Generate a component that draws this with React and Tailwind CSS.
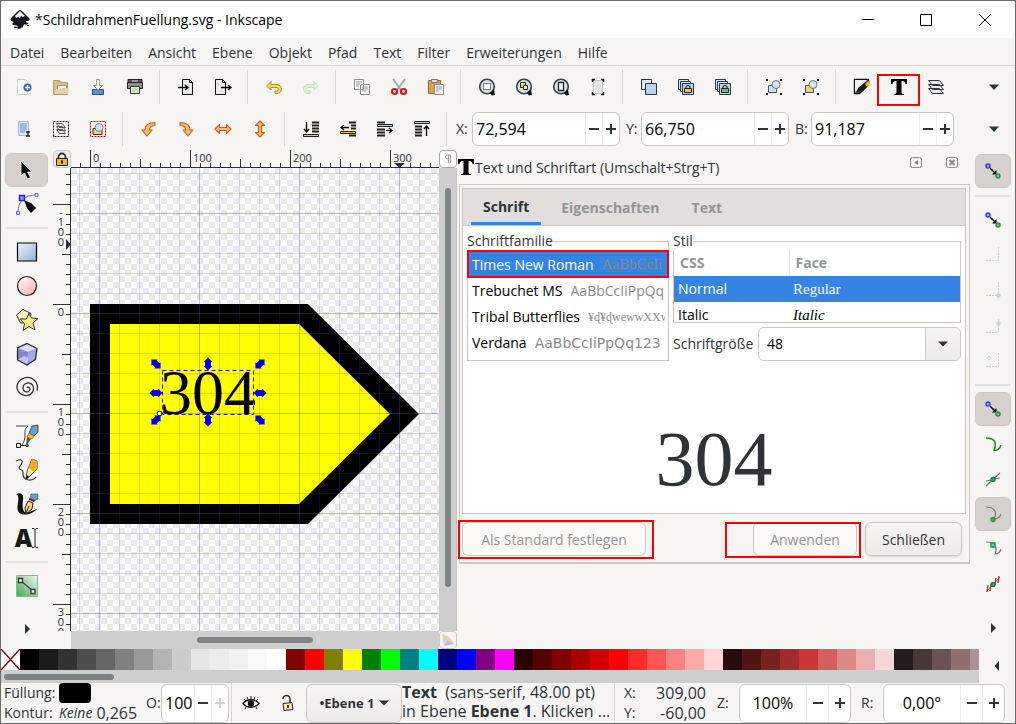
import React from 'react';

function Icon({ size = 16, children }) {
  return (
    <svg width={size} height={size} viewBox={`0 0 ${size} ${size}`} fill="none" className="shrink-0" aria-hidden="true">
      {children}
    </svg>
  );
}

function Magnifier({ children }) {
  return (
    <Icon size={18}>
      <circle cx="9" cy="8.500" r="7.300" fill="#d3e0ee" stroke="#3b4045" strokeWidth="1.600" />
      {children}
      <path d="M12 15l4-3.500 1 5.500-3 .5z" fill="#111" />
    </Icon>
  );
}

function Clones({ lock }) {
  return (
    <Icon size={18}>
      <path d="M1.5 1.5h10v10h-10z" fill="#dfe9f4" stroke="#23374d" />
      {lock && <path d="M3.500 3.500h10v10h-10z" fill="#dfe9f4" stroke="#23374d" />}
      <path d="M5.5 5.5h11v11h-11z" fill="#bcd2ea" stroke="#23374d" />
      {lock && (
        <>
          <path d="M9 11V9.500a2 2 0 014 0V11" stroke="#222" strokeWidth="1.200" />
          <path d="M7.500 10.500h7v4h-7z" fill={lock} stroke="#222" />
        </>
      )}
    </Icon>
  );
}

function Group({ fill }) {
  return (
    <Icon size={18}>
      <path d="M3.500 7.500h8v7h-8z" fill={fill} stroke="#44515e" />
      <circle cx="11" cy="6.500" r="4" fill="#d5e2ef" stroke="#66727e" />
      <path d="M1 1h2v2H1zM15 1h2v2h-2zM1 15h2v2H1zM15 15h2v2h-2z" fill="#111" />
    </Icon>
  );
}

const arrowOrange = { fill: '#f7b77a', stroke: '#c8610f', strokeWidth: 1.1, strokeLinejoin: 'round' };

const icons = {
  neu: (
    <Icon size={18}>
      <path d="M2.500 1.500h8l2 2v13h-10z" fill="#fbfbfb" stroke="#c9ccd0" />
      <circle cx="12.500" cy="9.500" r="4" fill="#3568b0" />
      <path d="M12.500 7v5M10 9.500h5" stroke="#fff" strokeWidth="1.4" />
    </Icon>
  ),
  oeffnen: (
    <Icon size={18}>
      <path d="M1.500 16.500v-14h6l1 2h7v12z" fill="#d8bd92" stroke="#b6976a" />
      <path d="M5.500 7.500h9v4h-9z" fill="#f5f3ee" stroke="#a99270" />
      <path d="M2.500 16l2-5h5l2-1h5v6z" fill="#e5cfab" />
    </Icon>
  ),
  speichern: (
    <Icon size={18}>
      <path d="M3.500 11.500h11v5h-11z" fill="#5f8fd0" stroke="#2c5697" />
      <path d="M7.500 1.500h3v6h3l-4.500 4.500-4.500-4.500h3z" fill="#f7f7f7" stroke="#9a9a9a" />
    </Icon>
  ),
  drucken: (
    <Icon size={18}>
      <path d="M2 1.500h14v3H2z" fill="#555" stroke="#222" />
      <path d="M1.500 4.500h15v6h-15z" fill="#8b8e8b" stroke="#222" />
      <path d="M6 3h6" stroke="#ddd" />
      <path d="M4.500 8.500h9v7h-9z" fill="#e5f5dd" stroke="#333" />
      <path d="M6 11h6M6 13h6" stroke="#9cc48b" />
    </Icon>
  ),
  importieren: (
    <Icon size={18}>
      <path d="M5.500 1.500h7l3 3v12h-10z" fill="#e9e9e9" stroke="#111" />
      <path d="M12.500 1.500v3h3" stroke="#111" />
      <path d="M1 9.500h9M8 7l3 2.500L8 12" stroke="#000" strokeWidth="1.3" />
    </Icon>
  ),
  exportieren: (
    <Icon size={18}>
      <path d="M1.500 1.500h7l3 3v12h-10z" fill="#e9e9e9" stroke="#111" />
      <path d="M8.500 1.500v3h3" stroke="#111" />
      <path d="M7 9.500h9M14 7l3 2.500-3 2.500" stroke="#000" strokeWidth="1.3" />
    </Icon>
  ),
  rueckgaengig: (
    <Icon size={18}>
      <path d="M1.500 8L6 3.500v3h6a4 4 0 010 9h-2v-2.500h2a1.800 1.800 0 000-3.500H6V12z" fill="#f3d860" stroke="#b8920f" />
    </Icon>
  ),
  wiederholen: (
    <Icon size={18}>
      <path d="M16.500 8L12 3.500v3H6a4 4 0 000 9h2v-2.500H6a1.800 1.800 0 010-3.500h6V12z" fill="#e0efd9" stroke="#c3dfb8" />
    </Icon>
  ),
  kopieren: (
    <Icon size={18}>
      <path d="M1.500 1.500h9v10h-9zM7.500 6.500h9v10h-9z" fill="#f6f6f6" stroke="#8b8e8f" />
      <path d="M3 4h6M3 6h4M3 8h3M9 9h6M9 11h6M9 13h4" stroke="#9b9b9b" />
    </Icon>
  ),
  ausschneiden: (
    <Icon size={18}>
      <path d="M3 1l8 11M15 1L7 12" stroke="#a5a9ab" strokeWidth="2" />
      <circle cx="4.500" cy="13.500" r="2.500" stroke="#d11a1a" strokeWidth="2.2" />
      <circle cx="13.500" cy="13.500" r="2.500" stroke="#d11a1a" strokeWidth="2.2" />
    </Icon>
  ),
  einfuegen: (
    <Icon size={18}>
      <path d="M1.500 2.500h12v13h-12z" fill="#d9a450" stroke="#96692a" />
      <path d="M4.500 1.500h6v3h-6z" fill="#ddd" stroke="#777" />
      <path d="M7.500 6.500h9v10h-9z" fill="#fafafa" stroke="#888" />
      <path d="M9 9h6M9 11h6M9 13h3" stroke="#999" />
    </Icon>
  ),
  zoomAuswahl: (
    <Magnifier>
      <path d="M5.500 5.500h7v6h-7z" fill="#fff" stroke="#111" strokeDasharray="1 1" />
    </Magnifier>
  ),
  zoomZeichnung: (
    <Magnifier>
      <path d="M5.500 4.500h5v5h-5z" fill="#f9d95b" stroke="#222" />
      <path d="M8.500 7.500h4v4h-4z" fill="#fbe89b" stroke="#222" />
    </Magnifier>
  ),
  zoomSeite: (
    <Magnifier>
      <path d="M6.500 4.500h5v8h-5z" fill="#fff" stroke="#222" strokeWidth="1.3" />
    </Magnifier>
  ),
  zoomBreite: (
    <Icon size={18}>
      <path d="M4.500 2.500h9v13h-9z" fill="#e4e4e4" stroke="#c4c4c4" />
      <path d="M3 1h3L3 4zM15 1h-3l3 3zM3 17h3l-3-3zM15 17h-3l3-3z" fill="#111" stroke="#111" strokeWidth="0.500" />
    </Icon>
  ),
  duplizieren: <Clones />,
  klonen: <Clones lock="#f6c945" />,
  klonTrennen: <Clones lock="#7bb661" />,
  gruppieren: <Group fill="#cfdeee" />,
  gruppeAufheben: <Group fill="#f4d265" />,
  fuellung: (
    <Icon size={18}>
      <path d="M1.500 1.500h14v5l-9 9h-5z" fill="#6a6a6a" stroke="#111" strokeWidth="1.400" />
      <path d="M2 14V2h12z" fill="#f1f1f1" />
      <path d="M4 14l1-4 8-6 3 3-6 6z" fill="#181818" />
      <path d="M12 6l5-4v5l-3 2z" fill="#f0b323" />
    </Icon>
  ),
  schrift: (
    <Icon size={18}>
      <path d="M1 1h16v5h-1.500c-.4-2.200-1.200-3-3-3H11.500v11c0 1.600.7 2 2.500 2.100V17H4v-.9c1.800-.1 2.500-.5 2.500-2.100V3H5.500c-1.800 0-2.600.8-3 3H1z" fill="#000" />
    </Icon>
  ),
  ebenen: (
    <Icon size={18}>
      <path d="M1.500 10.500h11l4 5h-11zM1.500 6.500h11l4 5h-11zM1.500 2.500h11l4 5h-11z" fill="#e7e9ea" stroke="#34393c" />
    </Icon>
  ),
  alles: (
    <Icon size={18}>
      <path d="M3.500 1.500h10v14h-10z" fill="#d6e4f4" stroke="#a6bcd6" />
      <path d="M5 4h7M5 6h7M5 8h7M5 10h6M5 12h5" stroke="#6a8fbc" />
      <path d="M11 12h4M11 16h4M13 12v4" stroke="#222" strokeWidth="1.3" />
    </Icon>
  ),
  alleEbenen: (
    <Icon size={18}>
      <path d="M1.500 1.500h15v15h-15z" stroke="#000" strokeDasharray="2 1" />
      <path d="M4.500 9.500h6l3 4h-6zM4.500 6.500h6l3 4h-6zM4.500 3.500h6l3 4h-6z" fill="#e8e8e8" stroke="#555" />
    </Icon>
  ),
  auswahlAufheben: (
    <Icon size={18}>
      <path d="M1.500 1.500h15v15h-15z" stroke="#c80000" strokeDasharray="2 1" />
      <path d="M4 8.500h9v6H4z" fill="#f5d468" stroke="#333" />
      <circle cx="10" cy="7.500" r="4" fill="#d4e1f0" stroke="#77808a" />
    </Icon>
  ),
  linksDrehen: (
    <Icon size={18}>
      <path d="M15 2.500v3c-4 0-5.500 1.500-5.500 4.500H12l-5 6-5-6h3c0-5 3.500-7.500 10-7.500z" {...arrowOrange} />
    </Icon>
  ),
  rechtsDrehen: (
    <Icon size={18}>
      <path d="M3 2.500v3c4 0 5.500 1.500 5.500 4.500H6l5 6 5-6h-3c0-5-3.500-7.500-10-7.500z" {...arrowOrange} />
    </Icon>
  ),
  horizontal: (
    <Icon size={18}>
      <path d="M1 9l4.500-4.500v3h7v-3L17 9l-4.500 4.500v-3h-7v3z" {...arrowOrange} />
    </Icon>
  ),
  vertikal: (
    <Icon size={18}>
      <path d="M9 1l4.500 4.500h-3v7h3L9 17l-4.500-4.500h3v-7h-3z" {...arrowOrange} />
    </Icon>
  ),
  nachUnten: (
    <Icon size={18}>
      <path d="M10 2.500h7M10 5.500h7M10 8.500h7M10 11.500h7" stroke="#222" strokeWidth="2" />
      <path d="M4.500 2v9M2 9l2.500 3L7 9" stroke="#000" strokeWidth="1.3" />
      <path d="M1.500 14.500h15v2h-15z" fill="#f3c83d" stroke="#222" />
    </Icon>
  ),
  absenken: (
    <Icon size={18}>
      <path d="M10 2.500h7M12 5.500h5M12 8.500h5M10 15.500h7" stroke="#222" strokeWidth="2" />
      <path d="M2 7.500h8M5 5L2 7.500 5 10" stroke="#000" strokeWidth="1.3" />
      <path d="M1.500 11.500h15v2h-15z" fill="#f3c83d" stroke="#222" />
    </Icon>
  ),
  anheben: (
    <Icon size={18}>
      <path d="M1 2.500h8M1 9.500h8M1 12.500h8M1 15.500h8" stroke="#222" strokeWidth="2" />
      <path d="M1.500 4.500h15v2h-15z" fill="#b9d0ea" stroke="#222" />
      <path d="M10 10.500h6M13 8l3 2.500-3 2.500" stroke="#000" strokeWidth="1.2" />
    </Icon>
  ),
  nachOben: (
    <Icon size={18}>
      <path d="M1.500 1.500h15v2h-15z" fill="#b9d0ea" stroke="#222" />
      <path d="M2 6.500h7M2 9.500h7M2 12.500h7M2 15.500h7" stroke="#222" strokeWidth="2" />
      <path d="M13.500 16V6M11 9l2.500-3L16 9" stroke="#000" strokeWidth="1.3" />
    </Icon>
  ),
};

const toolIcons = {
  auswahl: (
    <Icon size={24}>
      <path d="M6 3v15l3.500-3 3 6 3-1.500-3-5.500H17z" fill="#000" stroke="#fff" strokeWidth="0.8" />
    </Icon>
  ),
  knoten: (
    <Icon size={24}>
      <path d="M3 21C3 9 9 3 22 3" stroke="#777" />
      <path d="M4.500 3.500h5v5h-5z" fill="#8f8ff0" stroke="#2020e0" strokeWidth="1.4" />
      <path d="M20 1.500h3v3h-3zM1.500 19.500h3v3h-3z" fill="#dcdcff" stroke="#6464e6" />
      <path d="M9 8l7 3 5 5-5 5-4-5z" fill="#000" />
    </Icon>
  ),
  rechteck: (
    <Icon size={24}>
      <defs>
        <linearGradient id="rechteckVerlauf" x1="0" y1="0" x2="1" y2="1">
          <stop stopColor="#eef5fb" />
          <stop offset="1" stopColor="#8fb0d0" />
        </linearGradient>
      </defs>
      <path d="M2.500 3h19v18h-19z" fill="url(#rechteckVerlauf)" stroke="#000" strokeWidth="1.2" />
    </Icon>
  ),
  ellipse: (
    <Icon size={24}>
      <defs>
        <linearGradient id="ellipseVerlauf" x1="0" y1="0" x2="1" y2="1">
          <stop stopColor="#fff" />
          <stop offset="1" stopColor="#fba5b0" />
        </linearGradient>
      </defs>
      <circle cx="12" cy="12" r="9.500" fill="url(#ellipseVerlauf)" stroke="#222" strokeWidth="1.2" />
    </Icon>
  ),
  stern: (
    <Icon size={24}>
      <path d="M8 1.500l8 4-1.500 9-9 .5-4-8z" fill="#fdf6b8" stroke="#333" />
      <path d="M14 5l2.500 5 6.500.5-5 4.500 2 7-6-3.500-6 4 1.500-6.500-4.500-5h6.500z" fill="#fbec83" stroke="#333" />
    </Icon>
  ),
  quader: (
    <Icon size={24}>
      <path d="M12 1.500l10 5-1.500 11L12 23l-9.500-5V6z" fill="#8286cc" />
      <path d="M12 1.500l10 5-9 3.500-10.500-4z" fill="#dcddf7" />
      <path d="M13 10l9-3.500-1.500 11L12 23z" fill="#a4a7e2" />
      <path d="M2.500 18l6-4 5 1.500L12 23z" fill="#c3c5f0" />
      <path d="M12 1.500l10 5-1.500 11L12 23l-9.500-5V6z" stroke="#222" strokeWidth="1.200" />
    </Icon>
  ),
  spirale: (
    <Icon size={24}>
      <path d="M12 12c1-2 4 0 2.500 2.500-2 3-7 1-6.500-3 .5-5 7-6 9.500-2.500 3 5-1 11-7 10.500C4 19 .5 13 2.500 8 5 2 12 0 17 2.500c5 3 6 8 5 12" stroke="#333" strokeWidth="1.300" />
    </Icon>
  ),
  stift: (
    <Icon size={24}>
      <path d="M1 2h12C9 5 10 8 10 11c0 4-1 7-3 10" stroke="#444" />
      <path d="M1.500 19.500h4v4h-4zM11 20.500h2v2h-2zM5 21.500h6" fill="#fff" stroke="#111" />
      <path d="M17 2l6-1v7l-4 4-5-3z" fill="#6b9cc4" stroke="#334" strokeWidth="0.800" />
      <path d="M14 9l5 3-2 3-5-2z" fill="#f4b92b" stroke="#7a5a10" strokeWidth="0.600" />
      <path d="M12 13l4 2-5 7z" fill="#555" />
    </Icon>
  ),
  freihand: (
    <Icon size={24}>
      <path d="M1 3c6-3 8 0 4 5-3 5 3 2 3 6-1 9 9 10 13 5" stroke="#333" strokeWidth="1.200" />
      <path d="M17 1l5 2v8l-8 8-3 2 1-8z" fill="#fbe6a6" stroke="#333" strokeWidth="0.800" />
      <path d="M17 1l5 2v8l-3 3-5-4z" fill="#f6a81c" />
      <path d="M11.500 17l3 2-3.500 2z" fill="#111" />
    </Icon>
  ),
  kalligrafie: (
    <Icon size={24}>
      <path d="M1 2c5-2 8 0 7 6-1 9 0 14 6 12l8-3c-5 6-16 8-19 2C1 14 6 4 1 2z" fill="#111" />
      <path d="M16 2h7v5l-4 2-4-3z" fill="#6b9cc4" stroke="#334" strokeWidth="0.500" />
      <path d="M14 6l6 2-1 2-5-2z" fill="#b00020" />
      <path d="M13 9l5 2-1 6-6 5-1-6z" fill="#fbd978" stroke="#222" />
      <path d="M11 21l3-7" stroke="#222" />
    </Icon>
  ),
  text: (
    <span className="flex items-center">
      <b className="text-2xl leading-6 font-black text-[#1a1a1a]">A</b>
      <svg width="6" height="22" viewBox="0 0 6 22" fill="none" aria-hidden="true">
        <path d="M0 1.500h2l1 1 1-1h2M3 2v18M0 20.500h2l1-1 1 1h2" stroke="#222" />
      </svg>
    </span>
  ),
  verlauf: (
    <Icon size={24}>
      <defs>
        <linearGradient id="farbVerlauf" x1="0" y1="1" x2="1" y2="0">
          <stop stopColor="#47a554" />
          <stop offset="1" stopColor="#eef8ef" />
        </linearGradient>
      </defs>
      <path d="M1.500 1.500h21v21h-21z" fill="url(#farbVerlauf)" stroke="#7cc088" />
      <path d="M6 7l12 10" stroke="#444" strokeWidth="1.300" />
      <path d="M3.500 4.500h4v4h-4zM16 15.500h4v4h-4z" fill="#fff" stroke="#333" strokeWidth="1.300" />
    </Icon>
  ),
};

const snapIcons = {
  fang: (
    <Icon size={18}>
      <path d="M6 6l5 5" stroke="#000" strokeWidth="1.500" />
      <path d="M12.500 8v4.500H8z" fill="#000" />
      <circle cx="4" cy="4" r="2" fill="#a9a9fa" stroke="#3a3af0" strokeWidth="1.500" />
      <circle cx="14" cy="14" r="2" fill="#8fb09a" stroke="#2f8f3f" strokeWidth="1.500" />
    </Icon>
  ),
  rahmen: (
    <Icon size={18}>
      <path d="M2 14.500h12.500V1" stroke="#c9dccb" strokeDasharray="2 1" strokeWidth="1.200" />
    </Icon>
  ),
  rahmenEcke: (
    <Icon size={18}>
      <path d="M2 14.500h12.500V1" stroke="#cdd1cd" strokeDasharray="2 1" />
      <circle cx="14.500" cy="14.500" r="2.200" fill="#c4dcca" />
    </Icon>
  ),
  rahmenKante: (
    <Icon size={18}>
      <path d="M2 16.500h12.500V3" stroke="#cdd1cd" strokeDasharray="2 1" />
      <circle cx="14.500" cy="7.500" r="2.200" fill="#c4dcca" />
    </Icon>
  ),
  rahmenMitte: (
    <Icon size={18}>
      <path d="M2 15.500h12.500V2" stroke="#cdd1cd" strokeDasharray="2 1" />
      <circle cx="5" cy="7" r="1.500" stroke="#c4dcca" />
    </Icon>
  ),
  pfad: (
    <Icon size={18}>
      <path d="M2 3c9 0 11 5 8 12 4 1 6-2 7-5" stroke="#178a1d" strokeWidth="1.500" />
    </Icon>
  ),
  schnitt: (
    <Icon size={18}>
      <path d="M2 16L16 3M2 11l14-3" stroke="#777" strokeWidth="1.200" />
      <circle cx="9" cy="9.500" r="2" fill="#3a8fc8" stroke="#168a1d" strokeWidth="1.300" />
    </Icon>
  ),
  spitze: (
    <Icon size={18}>
      <path d="M2 2c8 0 12 5 8 12 4 0 6-2 7-5" stroke="#777" strokeWidth="1.200" />
      <circle cx="9" cy="14.500" r="2" fill="#5b8fa8" stroke="#2f9a3a" strokeWidth="1.300" />
    </Icon>
  ),
  glatt: (
    <Icon size={18}>
      <path d="M2 2c8 0 12 6 9 12 4 0 5-2 6-5" stroke="#777" strokeWidth="1.200" />
      <path d="M7 3h4v4H7z" fill="#7fb3e0" stroke="#12a01d" strokeWidth="1.300" />
    </Icon>
  ),
  mitte: (
    <Icon size={18}>
      <path d="M2 17L16 2" stroke="#777" />
      <path d="M4 10l-1 7M7 9l-1 7M12 3l-1 7M15 1l-1 7" stroke="#c92020" strokeWidth="1.300" />
      <circle cx="9" cy="9.500" r="2" fill="#3a8fc8" stroke="#168a1d" strokeWidth="1.300" />
    </Icon>
  ),
};

const commandBar = [
  [['Neu', 'neu'], ['Öffnen', 'oeffnen'], ['Speichern', 'speichern'], ['Drucken', 'drucken']],
  [['Importieren', 'importieren'], ['Exportieren', 'exportieren']],
  [['Rückgängig', 'rueckgaengig'], ['Wiederholen', 'wiederholen']],
  [['Kopieren', 'kopieren'], ['Ausschneiden', 'ausschneiden'], ['Einfügen', 'einfuegen']],
  [['Auswahl zoomen', 'zoomAuswahl'], ['Zeichnung zoomen', 'zoomZeichnung'], ['Seite zoomen', 'zoomSeite'], ['Seitenbreite', 'zoomBreite']],
  [['Duplizieren', 'duplizieren'], ['Klonen', 'klonen'], ['Klonverbindung trennen', 'klonTrennen']],
  [['Gruppieren', 'gruppieren'], ['Gruppierung aufheben', 'gruppeAufheben']],
  [['Füllung und Kontur', 'fuellung'], ['Text und Schriftart', 'schrift'], ['Ebenen', 'ebenen']],
];

const controlBar = [
  [['Alles auswählen', 'alles'], ['In allen Ebenen auswählen', 'alleEbenen'], ['Auswahl aufheben', 'auswahlAufheben']],
  [['Nach links drehen', 'linksDrehen'], ['Nach rechts drehen', 'rechtsDrehen'], ['Horizontal umkehren', 'horizontal'], ['Vertikal umkehren', 'vertikal']],
  [['Nach ganz unten', 'nachUnten'], ['Absenken', 'absenken'], ['Anheben', 'anheben'], ['Nach ganz oben', 'nachOben']],
];

const tools = [
  [['Auswahl', 'auswahl'], ['Knoten', 'knoten']],
  [['Rechteck', 'rechteck'], ['Ellipse', 'ellipse'], ['Stern', 'stern'], ['Quader', 'quader'], ['Spirale', 'spirale']],
  [['Stift', 'stift'], ['Freihand', 'freihand'], ['Kalligrafie', 'kalligrafie'], ['Text', 'text']],
  [['Farbverlauf', 'verlauf']],
];

const snaps = [
  [['Einrasten', 'fang', true]],
  [['Umrandungen', 'fang'], ['Kanten', 'rahmen'], ['Ecken', 'rahmenEcke'], ['Kantenmitten', 'rahmenKante'], ['Mittelpunkte', 'rahmenMitte']],
  [['Knoten', 'fang', true], ['Pfade', 'pfad'], ['Überschneidungen', 'schnitt'], ['Spitze Knoten', 'spitze', true], ['Glatte Knoten', 'glatt'], ['Linienmitten', 'mitte']],
];

const palette = [
  '#000000', '#1a1a1a', '#333333', '#4d4d4d', '#666666', '#808080', '#999999', '#b3b3b3', '#cccccc', '#e6e6e6', '#ececec', '#f2f2f2', '#f9f9f9', '#ffffff',
  '#800000', '#ff0000', '#808000', '#ffff00', '#008000', '#00ff00', '#008080', '#00ffff', '#000080', '#0000ff', '#800080', '#ff00ff',
  '#2b0000', '#550000', '#800000', '#aa0000', '#d40000', '#ff0000', '#ff2a2a', '#ff5555', '#ff8080', '#ffaaaa', '#ffd5d5',
  '#280b0b', '#501616', '#782121', '#a02c2c', '#c83737', '#d35f5f', '#de8787', '#e9afaf', '#f4d7d7',
  '#241c1c', '#483737', '#6c5353', '#916f6f', '#ac9393',
];

const fontList = [
  { name: 'Times New Roman', sample: 'AaBbCcIi', style: "font-['Liberation_Serif',serif] text-[15px]" },
  { name: 'Trebuchet MS', sample: 'AaBbCcIiPpQq1', style: "font-['Open_Sans',sans-serif]" },
  { name: 'Tribal Butterflies', sample: '¥ɖ¥ɖwewwXXw', style: "font-['Liberation_Serif',serif] text-xs" },
  { name: 'Verdana', sample: 'AaBbCcIiPpQq123', style: "font-['DejaVu_Sans',sans-serif]" },
];

function TitleBar() {
  return (
    <div className="flex h-[37px] shrink-0 items-center bg-white pr-px pl-2 text-black">
      <svg width="22" height="22" viewBox="0 0 22 22" aria-hidden="true">
        <path d="M11 1c1 0 2 1 3 2l6 6c1 1 1 2 0 2.500l-3 1c-1 .5 1 1 2 1.500s0 1.500-1 1.500h-3l-1 2.500c-.5 1-2 .5-2 1s-2 1.500-3.500.5c-1-.5.500-1.500 0-2.500-1-1-4-.5-5-1.500s1.500-1.500 1-2.500-3-1-3-2S2 9 3 8l5-5c1-1 2-2 3-2z" fill="#15171c" />
        <path d="M11 2l5 5-2 1-2-1-1 2-2-1-2 1-1-2z" fill="#e8ecf2" />
        <path d="M5 18.500c1-1 3-.5 3 .5M18 16.500h2" stroke="#15171c" />
      </svg>
      <h1 className="ml-1 flex-1 text-sm">*SchildrahmenFuellung.svg - Inkscape</h1>
      <div className="flex">
        <button aria-label="Minimieren" className="flex h-9 w-[59px] items-center justify-center">
          <Icon size={14}><path d="M1 6.500h12" stroke="#000" /></Icon>
        </button>
        <button aria-label="Maximieren" className="flex h-9 w-[58px] items-center justify-center">
          <Icon size={14}><path d="M1.500 1.500h11v11h-11z" stroke="#000" /></Icon>
        </button>
        <button aria-label="Schließen" className="flex h-9 w-[59px] items-center justify-center">
          <Icon size={14}><path d="M1 1l12 12M13 1L1 13" stroke="#000" /></Icon>
        </button>
      </div>
    </div>
  );
}

function MenuBar() {
  const items = ['Datei', 'Bearbeiten', 'Ansicht', 'Ebene', 'Objekt', 'Pfad', 'Text', 'Filter', 'Erweiterungen', 'Hilfe'];
  return (
    <nav className="flex h-7 shrink-0 items-center gap-4 border-b border-[#d9d6d3] pt-[2px] pl-[9px]">
      {items.map((item) => (
        <button key={item}>{item}</button>
      ))}
    </nav>
  );
}

function IconButtons({ groups }) {
  return groups.map((group, i) => (
    <React.Fragment key={i}>
      {i > 0 && <div className="mr-[7px] ml-[6px] h-[34px] w-px bg-[#d9d6d3]" />}
      {group.map(([label, icon]) => (
        <button key={label} aria-label={label} className="relative flex h-[34px] w-[37px] items-center justify-center">
          {icons[icon]}
          {icon === 'schrift' && <span className="absolute -inset-x-[3px] top-1 -bottom-[2px] border-2 border-[#fe0000]" />}
        </button>
      ))}
    </React.Fragment>
  ));
}

function Overflow() {
  return (
    <button aria-label="Mehr" className="mr-4 ml-auto">
      <Icon size={10}><path d="M0 2.500h10L5 8z" fill="#2e3436" /></Icon>
    </button>
  );
}

function SpinBox({ label, value, className, inputClass = 'pl-[3px]', buttonClass = 'w-[17px]', plusOff = false }) {
  return (
    <div className={`flex items-center rounded-md border border-[#cdc7c2] bg-white text-black ${className}`}>
      <input aria-label={label} defaultValue={value} className={`w-0 min-w-0 flex-1 bg-transparent text-base outline-none ${inputClass}`} />
      <button aria-label={`${label} verringern`} className={`flex h-full items-center justify-center border-l border-[#eeecea] ${buttonClass}`}>
        <Icon size={12}><path d="M1 6h10" stroke="#2e3436" strokeWidth="2" /></Icon>
      </button>
      <button aria-label={`${label} erhöhen`} className={`flex h-full items-center justify-center border-l border-[#eeecea] ${buttonClass}`}>
        <Icon size={12}><path d="M1 6h10M6 1v10" stroke={plusOff ? '#d0d0d0' : '#2e3436'} strokeWidth="2" /></Icon>
      </button>
    </div>
  );
}

function ToolBox() {
  return (
    <div className="flex w-[52px] shrink-0 flex-col pt-[3px] pr-[5px] pl-1">
      {tools.map((group, i) => (
        <React.Fragment key={i}>
          {i > 0 && <div className="my-[6px] h-[2px] bg-[#e2dfdc]" />}
          {group.map(([label, icon]) => (
            <button
              key={label}
              aria-label={label}
              className={`flex h-[34px] items-center justify-center rounded-md ${icon === 'auswahl' ? 'border border-[#cdc7c2] bg-[#d6d1cd]' : ''}`}
            >
              {toolIcons[icon]}
            </button>
          ))}
        </React.Fragment>
      ))}
      <button aria-label="Weitere Werkzeuge" className="mt-5 flex justify-center">
        <Icon size={12}><path d="M4 1l5 5-5 5z" fill="#2e3436" /></Icon>
      </button>
    </div>
  );
}

// pixel offset of ruler value 0 inside each ruler
const ZERO_X = 19;
const ZERO_Y = 136;

function tickLength(i) {
  if (i % 10 === 0) return 18;
  return i % 5 === 0 ? 9 : 5;
}

function HorizontalRuler() {
  const ticks = Array.from({ length: 120 }, (_, i) => i - 1);
  return (
    <svg className="h-full w-full min-w-0" aria-label="Horizontales Lineal">
      {ticks.map((i) => (
        <path key={i} d={`M${ZERO_X + i * 10 + 0.5} ${18 - tickLength(i)}V18`} stroke="#2e3436" />
      ))}
      {[0, 1, 2, 3].map((n) => (
        <text key={n} x={ZERO_X + n * 100 + 3} y="12" fontSize="11" fill="#2e3436">{n * 100}</text>
      ))}
      <path d="M0 17.500H2000" stroke="#2e3436" />
      <path d="M323 13h11l-5.500 5z" fill="#2e3436" />
    </svg>
  );
}

function VerticalRuler() {
  const ticks = Array.from({ length: 80 }, (_, i) => i - 13);
  return (
    <svg className="h-full w-full min-w-0" aria-label="Vertikales Lineal">
      {ticks.map((i) => (
        <path key={i} d={`M${18 - tickLength(i)} ${ZERO_Y + i * 10 + 0.5}H18`} stroke="#2e3436" />
      ))}
      {[-1, 0, 1, 2, 3].map((n) =>
        String(n * 100).split('').map((digit, i) => (
          <text key={`${n}-${i}`} x="8" y={ZERO_Y + n * 100 + 12 + i * 10} fontSize="11" textAnchor="middle" fill="#2e3436">{digit}</text>
        ))
      )}
      <path d="M17.500 0V2000" stroke="#2e3436" />
      <path d="M13 71v11l5-5.500z" fill="#2e3436" />
    </svg>
  );
}

// x, y and angle of the double-headed scale handles
const handles = [
  [85, 196, 45], [137, 196, 90], [189, 196, -45],
  [85, 225, 0], [189, 225, 0],
  [85, 252, -45], [137, 252, 90], [189, 252, 45],
];

function Canvas() {
  return (
    <svg className="h-full w-full min-w-0 bg-white" aria-label="Zeichenfläche">
      <defs>
        <pattern id="checker" width="12" height="12" patternUnits="userSpaceOnUse">
          <path d="M0 0h6v6H0zM6 6h6v6H6z" fill="#e9e9e9" />
        </pattern>
        <pattern id="minor" x="8" y="5" width="20" height="20" patternUnits="userSpaceOnUse">
          <path d="M.5 0v20M0 .5h20" stroke="#3f3fff" strokeOpacity=".18" />
        </pattern>
        <pattern id="major" x="28" y="45" width="100" height="100" patternUnits="userSpaceOnUse">
          <path d="M.5 0v100M0 .5h100" stroke="#3f3fff" strokeOpacity=".25" />
        </pattern>
      </defs>
      <rect width="100%" height="100%" fill="url(#checker)" />
      <path d="M19 136h218l111 110-111 110H19z" fill="#000" />
      <path d="M39 156h189l91 90-91 90H39z" fill="#ff0" />
      <rect width="100%" height="100%" fill="url(#minor)" />
      <rect width="100%" height="100%" fill="url(#major)" />
      <text x="89" y="246" fontSize="64" className="font-['Liberation_Serif',serif]">304</text>
      <path d="M91.500 202.500h91v44h-91z" fill="none" stroke="#fff" strokeOpacity=".5" />
      <path d="M91.500 202.500h91v44h-91z" fill="none" stroke="#222" strokeDasharray="4 3" />
      <path d="M86.500 243.500h4v4h-4z" fill="#fff" stroke="#2222aa" />
      {handles.map(([x, y, angle]) => (
        <path
          key={`${x}-${y}`}
          transform={`translate(${x} ${y}) rotate(${angle})`}
          d="M-6.500 0l4.500-4.500V-3h4v-1.500L6.500 0 2 4.500V3h-4v1.500z"
          fill="#0000f8"
        />
      ))}
    </svg>
  );
}

function Workspace() {
  return (
    <div className="grid min-w-0 flex-1 grid-cols-[18px_minmax(0,1fr)_18px] grid-rows-[18px_minmax(0,1fr)_18px]">
      <button aria-label="Hilfslinien sperren" className="flex items-center justify-center rounded-sm border border-[#cdc7c2] bg-[#efedec]">
        <Icon size={14}>
          <path d="M3.500 7V5a3.500 3.500 0 017 0v2" stroke="#333" strokeWidth="1.800" />
          <path d="M1.500 6.500h11v7h-11z" fill="#f5b52c" stroke="#222" />
          <path d="M7 8.500v3" stroke="#111" strokeWidth="2" />
        </Icon>
      </button>
      <HorizontalRuler />
      <button aria-label="Anzeigemodus" className="flex items-center justify-center rounded border border-[#aaa6a2] bg-white">
        <Icon size={12}><path d="M6.500 10V2H5.500a2 2 0 000 4h1M8.500 10V2H6" stroke="#999" /></Icon>
      </button>
      <VerticalRuler />
      <Canvas />
      <div className="flex justify-center border-r border-[#c4c0bc] bg-[#cecece] pt-5">
        <div className="h-[90%] w-[6px] rounded-full bg-[#7e8484]" />
      </div>
      <div />
      <div className="flex items-center bg-[#cecece] pl-[126px]">
        <div className="h-[6px] w-[116px] rounded-full bg-[#7e8484]" />
      </div>
      <button aria-label="Farbmanagement" className="flex items-center justify-center rounded border border-[#cdc7c2] bg-[#f6f5f4]">
        <svg width="14" height="14" viewBox="0 0 14 14" aria-hidden="true">
          <path d="M1 1l5 4-3 8z" fill="#b5e8c4" />
          <path d="M1 1c5 1 10 5 12 10L6 8z" fill="#f6c9b3" />
          <path d="M3 13l3-6 7 4z" fill="#c7b6ee" />
        </svg>
      </button>
    </div>
  );
}

function FontTab() {
  return (
    <div className="flex min-h-0 flex-1 flex-col px-1 pt-[6px]">
      <div className="flex gap-1">
        <fieldset className="h-[129px] w-[202px] min-w-0 shrink-0 border border-[#cdc7c2]">
          <legend className="-ml-px leading-[18px] text-[#2e3436]">Schriftfamilie</legend>
          <ul className="relative mt-[2px]">
            {fontList.map((font, i) => (
              <li key={font.name} className={`flex h-[26px] items-center gap-2 overflow-hidden pr-[3px] pl-1 whitespace-nowrap ${i === 0 ? 'bg-[#3584e4] text-white' : 'text-black'}`}>
                <span className="shrink-0">{font.name}</span>
                <span className={`min-w-0 overflow-hidden text-[#8a8a8a] ${font.style}`}>{font.sample}</span>
              </li>
            ))}
            <li aria-hidden="true" className="absolute -inset-x-px -top-[2px] h-7 border-2 border-[#fe0000]" />
          </ul>
        </fieldset>
        <div className="flex min-w-0 flex-1 flex-col gap-1">
          <fieldset className="h-[91px] min-w-0 overflow-hidden border border-[#cdc7c2]">
            <legend className="-ml-px leading-[18px] text-[#2e3436]">Stil</legend>
            <table className="w-full table-fixed text-left">
              <thead>
                <tr className="h-[26px] text-[#929595]">
                  <th className="w-[115px] border-r border-[#f0eeec] pl-[6px]">CSS</th>
                  <th className="pl-[6px]">Face</th>
                </tr>
              </thead>
              <tbody>
                <tr className="h-[26px] bg-[#3584e4] text-white">
                  <td className="pl-1">Normal</td>
                  <td className="pl-1 font-['Liberation_Serif',serif] text-[15px] leading-5">Regular</td>
                </tr>
                <tr className="h-[26px] text-black">
                  <td className="pl-1">Italic</td>
                  <td className="pl-1 font-['Liberation_Serif',serif] text-[15px] leading-5 italic">Italic</td>
                </tr>
              </tbody>
            </table>
          </fieldset>
          <div className="flex items-center gap-1">
            <label htmlFor="schriftgroesse" className="w-[81px]">Schriftgröße</label>
            <div className="flex h-[34px] min-w-0 flex-1 overflow-hidden rounded-md border border-[#cdc7c2] bg-white">
              <input id="schriftgroesse" defaultValue="48" className="min-w-0 flex-1 pl-2 text-black outline-none" />
              <button aria-label="Schriftgröße wählen" className="flex w-[35px] items-center justify-center border-l border-[#cdc7c2] bg-gradient-to-b from-[#f6f5f4] to-[#edebe9]">
                <Icon size={10}><path d="M0 2.500h10L5 7.500z" fill="#2e3436" /></Icon>
              </button>
            </div>
          </div>
        </div>
      </div>
      <p className="flex flex-1 items-center justify-center pt-11 font-['Liberation_Serif',serif] text-[78px] leading-none">304</p>
    </div>
  );
}

function TextDialog() {
  return (
    <section className="flex w-[513px] shrink-0 flex-col">
      <header className="flex h-[34px] items-center">
        {icons.schrift}
        <h2 className="flex-1 pt-px">Text und Schriftart (Umschalt+Strg+T)</h2>
        <div className="flex gap-6 pr-3 pb-2">
          <button aria-label="Andocken">
            <Icon size={12}>
              <rect x=".5" y=".5" width="11" height="10" rx="2" stroke="#888" />
              <path d="M8 3v5L4 5.500z" fill="#888" />
            </Icon>
          </button>
          <button aria-label="Dialog schließen">
            <Icon size={12}>
              <rect x=".5" y=".5" width="11" height="10" rx="2" stroke="#888" />
              <path d="M3.500 3l5 5M8.500 3l-5 5" stroke="#888" strokeWidth="2" />
            </Icon>
          </button>
        </div>
      </header>
      <div className="ml-[2px] flex h-[380px] flex-col border border-b-2 border-[#cdc7c2] pt-[3px] pr-[3px] pl-[2px]">
        <div className="flex h-[326px] flex-col border border-[#cdc7c2] bg-white">
          <div role="tablist" className="flex h-[37px] shrink-0 border-b border-[#cdc7c2] bg-[#e1dedb] pl-2 font-bold text-[#929595]">
            <button role="tab" aria-selected="true" className="border-b-[3px] border-[#3584e4] px-3 pt-[3px] text-[#2e3436]">Schrift</button>
            <button role="tab" aria-selected="false" className="ml-2 px-3 pt-[2px]">Eigenschaften</button>
            <button role="tab" aria-selected="false" className="ml-2 px-3 pt-[2px]">Text</button>
          </div>
          <FontTab />
        </div>
        <div className="flex items-center pt-2 pr-1">
          <div className="relative">
            <button disabled className="h-[34px] w-[184px] rounded-md border border-[#cdc7c2] bg-[#faf9f8] pt-px text-[#929595]">Als Standard festlegen</button>
            <span className="absolute -top-[2px] -right-2 -bottom-[3px] -left-1 border-2 border-[#fe0000]" />
          </div>
          <div className="relative mr-2 ml-auto">
            <button disabled className="h-[34px] w-[104px] rounded-md border border-[#cdc7c2] bg-[#faf9f8] pt-px text-[#929595]">Anwenden</button>
            <span className="absolute top-0 -right-1 -bottom-[2px] -left-7 border-2 border-[#fe0000]" />
          </div>
          <button className="h-[34px] w-[97px] rounded-md border border-[#cdc7c2] bg-gradient-to-b from-[#f6f5f4] to-[#edebe9] pt-px shadow-sm">Schließen</button>
        </div>
      </div>
    </section>
  );
}

function SnapBar() {
  return (
    <div className="flex w-[45px] shrink-0 flex-col pt-1 pr-1 pl-[5px]">
      {snaps.map((group, i) => (
        <React.Fragment key={i}>
          {i > 0 && <div className="my-[6px] h-[2px] shrink-0 bg-[#e2dfdc]" />}
          {group.map(([label, icon, active]) => (
            <button
              key={label}
              aria-label={label}
              aria-pressed={Boolean(active)}
              className={`mb-px flex h-[34px] shrink-0 items-center justify-center rounded-md ${active ? 'border border-[#cdc7c2] bg-[#d6d1cd]' : ''}`}
            >
              {snapIcons[icon]}
            </button>
          ))}
        </React.Fragment>
      ))}
      <button aria-label="Weitere Einrastoptionen" className="mt-5 flex justify-center">
        <Icon size={12}><path d="M4 1l5 5-5 5z" fill="#2e3436" /></Icon>
      </button>
    </div>
  );
}

function Palette() {
  return (
    <div className="flex h-[34px] shrink-0">
      <div className="flex min-w-0 flex-1 flex-col bg-[#cecece]">
        <div className="flex h-[21px] overflow-hidden">
          <button aria-label="Keine Farbe" className="w-[19px] shrink-0 bg-white">
            <svg width="19" height="21" viewBox="0 0 19 21" aria-hidden="true">
              <path d="M0 0l19 21M19 0L0 21" stroke="#800000" strokeWidth="1.500" />
            </svg>
          </button>
          {palette.map((color, i) => (
            <button key={i} aria-label={color} className="w-[19px] shrink-0" style={{ backgroundColor: color }} />
          ))}
        </div>
        <div className="mt-1 ml-[3px] h-[6px] w-[110px] rounded-full bg-[#7e8484]" />
      </div>
      <button aria-label="Palette wählen" className="flex w-9 items-center justify-center">
        <Icon size={12}><path d="M8 1v10L3.500 6z" fill="#2e3436" /></Icon>
      </button>
    </div>
  );
}

function StatusBar() {
  return (
    <footer className="flex h-10 shrink-0 items-center">
      <div className="grid w-[142px] grid-cols-[54px_1fr] pl-[3px] leading-5">
        <span>Füllung:</span>
        <span className="ml-px h-5 w-8 rounded bg-black" />
        <span>Kontur:</span>
        <span className="flex items-center gap-1 pl-px">
          <i>Keine</i>
          <span className="text-base leading-5">0,265</span>
        </span>
      </div>
      <span className="w-[18px] pl-[3px]">O:</span>
      <SpinBox label="Deckkraft" value="100" className="h-[39px] w-[68px]" plusOff />
      <div className="ml-[2px] h-full w-px bg-[#d9d6d3]" />
      <button aria-label="Ebene sichtbar" className="flex w-[37px] justify-center">
        <Icon size={18}>
          <path d="M1 9.500c4-5 12-5 16 0-4 5-12 5-16 0z" fill="#fff" stroke="#111" strokeWidth="1.300" />
          <circle cx="9" cy="9.500" r="3.200" fill="#111" />
          <path d="M2 5l2 2M5 3l1 2.500M9 2v3M13 3l-1 2.500M16 5l-2 2M4 13l-1 2M14 13l1 2" stroke="#111" />
        </Icon>
      </button>
      <button aria-label="Ebene entsperrt" className="flex w-[37px] justify-center">
        <Icon size={18}>
          <path d="M4 5a3.500 3.500 0 017 0v4" stroke="#333" strokeWidth="1.600" />
          <path d="M4 9.500l9-1 1 7-9 1z" fill="#f7ecb0" stroke="#222" />
          <path d="M9 11v3" stroke="#111" strokeWidth="1.600" />
        </Icon>
      </button>
      <button className="flex h-[39px] w-[96px] items-center justify-center gap-1 rounded-md border border-[#cdc7c2] bg-gradient-to-b from-[#f6f5f4] to-[#edebe9] text-[13px] font-bold">
        •Ebene 1
        <Icon size={10}><path d="M0 2.500h10L5 7.500z" fill="#2e3436" /></Icon>
      </button>
      <p className="h-full min-w-0 flex-1 overflow-hidden border-r border-[#d9d6d3] text-base leading-[19px] whitespace-nowrap">
        <b>Text</b>&nbsp; (sans-serif, 48.00 pt)
        <br />
        in Ebene <b>Ebene 1</b>. Klicken ...
      </p>
      <dl className="grid w-[91px] grid-cols-[20px_1fr] pl-[9px] leading-5">
        <dt>X:</dt>
        <dd className="text-right text-base leading-5">309,00</dd>
        <dt>Y:</dt>
        <dd className="text-right text-base leading-5">-60,00</dd>
      </dl>
      <span className="w-[33px] pl-[11px]">Z:</span>
      <SpinBox label="Zoom" value="100%" className="h-[39px] w-[112px]" inputClass="text-center" buttonClass="w-[22px]" />
      <span className="w-8 pl-[10px]">R:</span>
      <SpinBox label="Drehung" value="0,00°" className="mr-[10px] h-[39px] w-[122px]" inputClass="text-center" buttonClass="w-[22px]" />
    </footer>
  );
}

export default function App() {
  return (
    <div className="flex min-h-screen flex-col border border-[#6b6b6b] bg-[#f6f5f4] font-['Open_Sans',sans-serif] text-sm text-[#2e3436]">
      <TitleBar />
      <MenuBar />
      <div className="flex h-[42px] shrink-0 items-center pl-1">
        <IconButtons groups={commandBar} />
        <Overflow />
      </div>
      <div className="flex h-[42px] shrink-0 items-center pl-1">
        <IconButtons groups={controlBar} />
        <div className="mr-[9px] ml-[6px] h-[34px] w-px bg-[#d9d6d3]" />
        <span className="w-4">X:</span>
        <SpinBox label="X" value="72,594" className="h-[34px] w-[148px]" />
        <span className="ml-[6px] w-[15px]">Y:</span>
        <SpinBox label="Y" value="66,750" className="h-[34px] w-[148px]" />
        <span className="ml-[6px] w-4">B:</span>
        <SpinBox label="B" value="91,187" className="h-[34px] w-[143px]" />
        <Overflow />
      </div>
      <main className="flex flex-1">
        <ToolBox />
        <Workspace />
        <TextDialog />
        <SnapBar />
      </main>
      <Palette />
      <StatusBar />
    </div>
  );
}
